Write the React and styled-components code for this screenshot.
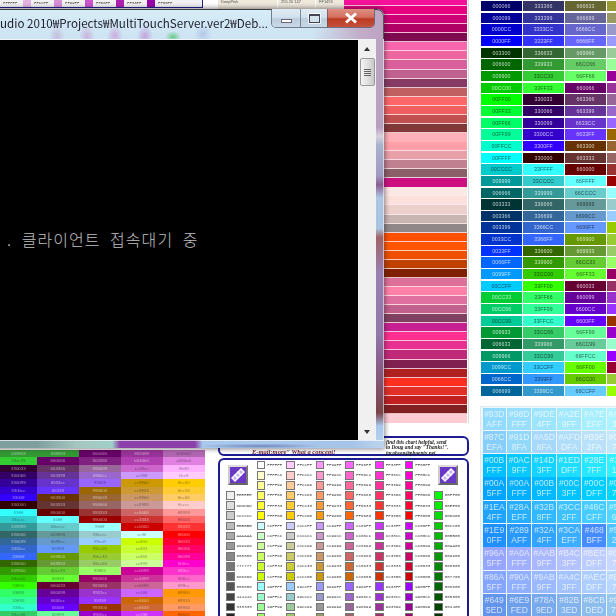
import React from 'react';
import styled, { createGlobalStyle } from 'styled-components';

const GlobalStyle = createGlobalStyle`
    html, body { margin: 0; padding: 0; background: #fff; }
    body { font-family: "Liberation Sans", "Noto Sans CJK KR", sans-serif; }
`;

const luminance = (hex) => {
    const n = parseInt(hex.replace('#', ''), 16);
    return (0.299 * (n >> 16) + 0.587 * ((n >> 8) & 255) + 0.114 * (n & 255)) / 255;
};
const inkFor = (hex, alpha = 0.72) =>
    luminance(hex) > 0.52 ? `rgba(0,0,0,${alpha - 0.1})` : `rgba(255,255,255,${alpha})`;

const TABLE_ROWS = [
    ['000066', '333366', '666633', '999933'], ['000099', '333399', '666699', '999966'],
    ['0000CC', '3333CC', '6666CC', '9999CC'], ['0000FF', '3333FF', '6666FF', '9999FF'],
    ['003300', '336633', '669966', '99CC99'], ['006600', '339933', '66CC66', '99FF99'],
    ['009900', '33CC33', '66FF66', '990099'], ['00CC00', '33FF33', '660066', '993399'],
    ['00FF00', '330033', '663366', '996699'], ['00FF33', '330066', '663399', '9966CC'],
    ['00FF66', '330099', '6633CC', '9966FF'], ['00FF99', '3300CC', '6633FF', '996600'],
    ['00FFCC', '3300FF', '663300', '996633'], ['00FFFF', '330000', '663333', '996666'],
    ['00CCCC', '33FFFF', '660000', '993333'], ['009999', '33CCCC', '66FFFF', '990000'],
    ['006666', '339999', '66CCCC', '99FFFF'], ['003333', '336666', '669999', '99CCCC'],
    ['003366', '336699', '6699CC', '99CCFF'], ['003399', '3366CC', '6699FF', '99CC00'],
    ['0033CC', '3366FF', '669900', '99CC33'], ['0033FF', '336600', '669933', '99CC66'],
    ['0066FF', '339900', '66CC33', '99FF66'], ['0099FF', '33CC00', '66FF33', '990066'],
    ['00CCFF', '33FF00', '660033', '993366'], ['00CC33', '33FF66', '660099', '9933CC'],
    ['00CC66', '33FF99', '6600CC', '9933FF'], ['00CC99', '33FFCC', '6600FF', '993300'],
    ['009933', '33CC66', '66FF99', '9900CC'], ['006633', '339966', '66CC99', '99FFCC'],
    ['009966', '33CC99', '66FFCC', '9900FF'], ['0099CC', '33CCFF', '66FF00', '990033'],
    ['0066CC', '3399FF', '66CC00', '99CC33'], ['006699', '3399CC', '66CCFF', '99FF00'],
];

const BLUE_ROWS = [
    ['93DAFF', '98DFFF', '9DE4FF', 'A2E9FF', 'A7EEFF', 'ACF3FF'],
    ['87CEFA', '91D8FA', 'A5D8FA', 'AFDDFA', 'B9E2FA', 'C3E7FA'],
    ['00BFFF', '0AC9FF', '14D3FF', '1EDDFF', '28E7FF', '32F1FF'],
    ['00A5FF', '00AFFF', '00B9FF', '00C3FF', '00CDFF', '00D7FF'],
    ['1EA4FF', '28AEFF', '32B8FF', '3CC2FF', '46CCFF', '50D6FF'],
    ['1E90FF', '289AFF', '32A4FF', '3CAEFF', '468BFF', '50C2FF'],
    ['96A5FF', 'A0AFFF', 'AAB9FF', 'B4C3FF', 'BECDFF', 'C8D7FF'],
    ['86A5FF', '90AFFF', '9AB9FF', 'A4C3FF', 'AECDFF', 'B8D7FF'],
    ['6495ED', '6E9FED', '78A9ED', '82B3ED', '8CBDED', '96C7ED'],
];

const LEFT_ROWS = [
    ['339933', '339933', '660066', '993399', 'b266b2'], ['33cc33', '660066', '802080', 'b040b0', 'e080e0'],
    ['330033', '663366', '996699', 'cc66cc', 'ffb3ff'], ['330066', '663399', '9966cc', 'cc99ff', 'ffccff'],
    ['330099', '6633cc', '9966ff', 'cc9900', 'ffcc00'], ['3300cc', '6633ff', '996600', 'cc9933', 'ffcc33'],
    ['3300ff', '663300', '996633', 'cc9966', 'ffcc66'], ['330000', '663333', '996666', 'cc9999', 'ffcccc'],
    ['33ffff', '660000', '993333', 'cc6666', 'ff9999'], ['33cccc', '66ffff', '990000', 'cc3333', 'ff6666'],
    ['339999', '66cccc', '99ffff', 'cc0000', 'ff3333'], ['336666', '669999', '99cccc', 'ccffff', 'ff0000'],
    ['336699', '6699cc', '99ccff', 'ccff00', 'ff0033'], ['3366cc', '6699ff', '99cc00', 'ccff33', 'ff0066'],
    ['3366ff', '669900', '99cc33', 'ccff66', 'ff0099'], ['336600', '669933', '99cc66', 'ccff99', 'ff00cc'],
    ['339900', '66cc33', '99ff66', 'cc0099', 'ff33cc'], ['33cc00', '66ff33', '990066', 'cc3399', 'ff66cc'],
    ['33ff00', '660033', '993366', 'cc6699', 'ff99cc'], ['33ff66', '660099', '9933cc', 'cc66ff', 'ff9900'],
    ['33ff99', '6600cc', '9933ff', 'cc6600', 'ff9933'], ['33ffcc', '6600ff', '993300', 'cc6633', 'ff9966'],
    ['33cc66', '66ff99', '9900cc', 'cc33ff', 'ff6600'],
];

const STRIPES = [
    ['#f5109a', 1], ['#e6007f', 1], ['#cc0077', 1], ['#b00066', 1], ['#7f0a50', 1],
    ['#f765ac', 1], ['#ee66a0', 1], ['#d9609a', 1], ['#c0608f', 1], ['#843a62', 1],
    ['#c06060', 1], ['#ff6666', 1], ['#ee6060', 1], ['#c05050', 1], ['#803838', 1],
    ['#ffb0b8', 0], ['#ffa0a8', 1], ['#e8a0a8', 1], ['#c08090', 1], ['#8a6068', 1],
    ['#cc1080', 0], ['#fce8e4', 1], ['#fce0dc', 1], ['#ecd0cc', 1], ['#c8b4b0', 1], ['#908888', 1],
    ['#ff5000', 1], ['#ff5500', 1], ['#ee4f00', 1], ['#c04000', 1], ['#802000', 1],
    ['#dd7098', 1], ['#ff80a8', 1], ['#e070a0', 1], ['#c0608c', 1], ['#804060', 1],
    ['#c82090', 1], ['#ff3090', 1], ['#e83090', 1], ['#c02878', 1], ['#802050', 1],
    ['#b02020', 1], ['#ff3020', 1], ['#e03028', 1], ['#c02020', 1], ['#802020', 1],
    ['#ffccd4', 0],
];

const GREYS = ['EEEEEE', 'DDDDDD', 'CCCCCC', 'BBBBBB', 'AAAAAA', '999999', '888888', '777777', '666666', '555555', '444444', '333333', '222222'];
const GREENS = ['00FF00', '00EE00', '00DD00', '00CC00', '00BB00', '00AA00', '009900', '008800', '007700', '006600', '005500', '004400', '003300'];
const STEPS = ['FF', 'CC', '99', '66', '33', '00'];
const RED_STEPS = ['FF', 'CC', '99'];
const swatchColumn = (g) => {
    const list = [];
    RED_STEPS.forEach((r) => STEPS.forEach((b) => list.push(r + g + b)));
    return list.slice(0, 16);
};

const Page = styled.div`
    position: relative;
    width: 616px;
    height: 616px;
    overflow: hidden;
    background: #fff;
    display: grid;
    grid-template-columns: 480px 136px;
`;

const LeftPane = styled.div`
    display: flex;
    flex-direction: column;
    filter: blur(0.4px);
`;

const TopRow = styled.div`
    height: 436px;
    display: flex;
    align-items: flex-start;
`;

const TopPanelEdge = styled.div`
    width: 203px;
    height: 8px;
    flex: none;
    box-sizing: border-box;
    display: flex;
    padding-left: 3px;
    gap: 3.5px;
    background: #f2f2f4;
    border-bottom: 1px solid #1c1c90;
    border-right: 1px solid #1c1c90;
`;

const TopSwatchLabel = styled.span`
    width: 16px;
    font: 4px/7px "Liberation Mono", monospace;
    color: #444;
`;

const TopSwatch = styled.span`
    width: 8px;
    height: 7px;
    background: ${(p) => p.$bg};
`;

const NameRow = styled.div`
    margin-left: 14px;
    width: 127px;
    height: 9px;
    flex: none;
    display: grid;
    grid-template-columns: 60px 38px 29px;
    background: #eee9dc;
`;

const NameCell = styled.span`
    font: 4px/4px "Liberation Sans", sans-serif;
    color: #555;
    padding-left: 3px;
    border-left: 1px solid #fff;
`;

const StripeColumn = styled.div`
    width: 123px;
    margin-top: -3px;
    flex: none;
    box-sizing: content-box;
    padding-right: 1px;
    border-right: 1px solid #d8dcd8;
`;

const Stripe = styled.div`
    height: 9.07px;
    box-sizing: border-box;
    background: ${(p) => p.$bg};
    border-bottom: ${(p) => (p.$line ? '1.2px solid rgba(255,235,240,.8)' : 'none')};
`;

const BottomRow = styled.div`
    display: flex;
    align-items: flex-start;
`;

const LeftChart = styled.div`
    width: 205px;
    margin-top: 14px;
    flex: none;
    display: grid;
    grid-template-columns: 36.7px 42.3px 41.7px 42px 42.3px;
    grid-auto-rows: 7.33px;
    filter: blur(0.6px);
`;

const ChartCell = styled.span`
    background: #${(p) => p.$bg};
    color: ${(p) => p.$ink};
    font: 4.4px/7.33px "Liberation Sans", sans-serif;
    text-align: center;
    overflow: hidden;
`;

const ChartPanel = styled.div`
    margin-left: 13px;
    width: 251px;
    flex: none;
    display: flex;
    flex-direction: column;
    gap: 2px;
`;

const HeaderBox = styled.div`
    height: 20px;
    box-sizing: border-box;
    border: 2px solid #1c1c90;
    border-radius: 6px;
    display: flex;
    background: #fff;
`;

const Concept = styled.span`
    margin: 9.5px 0 0 32px;
    width: 134px;
    font: italic bold 6.5px/8px "Liberation Serif", serif;
    color: #6b1d2c;
    white-space: nowrap;
`;

const ThanksNote = styled.div`
    font: italic bold 5.3px/5.6px "Liberation Serif", serif;
    color: #222;
    white-space: nowrap;
    margin-top: 1.5px;
`;

const SwatchBox = styled.div`
    box-sizing: border-box;
    height: 170px;
    border: 2px solid #1c1c90;
    border-bottom: none;
    border-radius: 6px 6px 0 0;
    padding-left: 6px;
    background: #fff;
    display: grid;
    grid-auto-flow: column;
    grid-template-rows: repeat(16, 10.15px);
    grid-template-columns: 30.7px repeat(7, 29.6px);
`;

const SwatchItem = styled.div`
    display: flex;
    align-items: center;
    gap: 2px;
`;

const Swatch = styled.span`
    width: 8.6px;
    height: 8.6px;
    flex: none;
    box-sizing: border-box;
    background: #${(p) => p.$bg};
    border: 1px solid #777;
`;

const SwatchLabel = styled.span`
    font: 4.2px/6px "Liberation Mono", monospace;
    color: #444;
`;

const LogoFrame = styled.div`
    grid-row: span 3;
    width: 20px;
    height: 20px;
    margin: 5px 0 0 ${(p) => p.$offset}px;
    box-sizing: border-box;
    border: 2px solid;
    border-color: #ddd #777 #666 #ccc;
`;

const RightPane = styled.div`
    display: flex;
    flex-direction: column;
    filter: blur(0.4px);
    overflow: hidden;
    padding-top: 1px;
`;

const ColorTable = styled.div`
    margin-left: 1px;
    width: 160px;
    display: grid;
    grid-template-columns: repeat(4, 41px);
    column-gap: 1px;
    grid-auto-rows: 10.4px;
    row-gap: 1.27px;
`;

const ColorCell = styled.span`
    background: #${(p) => p.$bg};
    color: ${(p) => p.$ink};
    font: 5.2px/10.4px "Liberation Sans", sans-serif;
    text-align: center;
    letter-spacing: 0.1px;
`;

const BlueTable = styled.div`
    margin-top: 9.5px;
    width: 160px;
    padding: 1px 0 0 1.5px;
    border: 1px solid #dde9f0;
    background: #eef6fb;
    display: grid;
    grid-template-columns: repeat(6, 23.6px);
    column-gap: 1.4px;
    grid-auto-rows: 22.4px;
    row-gap: 0.93px;
`;

const BlueCell = styled.div`
    background: #${(p) => p.$bg};
    color: rgba(255,255,255,.72);
    font: 8.5px/10px "Liberation Sans", sans-serif;
    text-align: center;
    padding-top: 1px;
    box-sizing: border-box;
    white-space: nowrap;
`;

const HexLine = styled.div``;

const ConsoleWindow = styled.div`
    position: absolute;
    left: -10px;
    top: 9px;
    width: 394px;
    height: 439px;
    box-sizing: border-box;
    border-radius: 0 7px 0 0;
    padding: 0 8px;
    display: flex;
    flex-direction: column;
    box-shadow: 0 0 5px 1px rgba(40,30,40,.55), inset -1px 0 0 rgba(255,255,255,.5);
    background: linear-gradient(180deg,
        #bba3c2 0, #b9a0bf 27%, #d8d2dc 29%, #a9b2cc 31%, #a09ac0 38%, #8c5c94 40%,
        #adc6e2 43%, #a8c4e0 50%, #a06264 52%, #9a80b0 60%, #9278a8 74%, #8a6090 80%,
        #7a4448 92%, #a8c8ec 95%, #bcd4ee 100%);
`;

const TitleBar = styled.div`
    height: 30px;
    margin: 0 -8px;
    padding: 0 9px 0 0;
    flex: none;
    display: flex;
    justify-content: space-between;
    border-radius: 0 7px 0 0;
    box-shadow: inset 0 1px 0 #3c3c44, inset -1px 0 0 #555;
    background:
        radial-gradient(ellipse 8px 11px at 67px 27px, rgba(170,90,170,.28), transparent),
        radial-gradient(ellipse 8px 11px at 97px 27px, rgba(190,70,170,.3), transparent),
        radial-gradient(ellipse 8px 11px at 125px 27px, rgba(190,50,170,.32), transparent),
        radial-gradient(ellipse 8px 11px at 155px 27px, rgba(170,40,170,.34), transparent),
        radial-gradient(ellipse 8px 6px at 183px 28px, rgba(60,190,90,.7), transparent),
        radial-gradient(ellipse 9px 9px at 213px 25px, rgba(120,130,210,.3), transparent),
        linear-gradient(90deg, rgba(0,0,0,0) 82%, #c2adc8 94%, #bca3c2 100%),
        linear-gradient(180deg, #d6ecf6, #cde3f3);
`;

const TitleText = styled.div`
    padding: 6px 0 0 10px;
    min-width: 0;
    font: 11.6px/17px "Noto Sans CJK KR", "Noto Sans", sans-serif;
    color: #1b1b2a;
    white-space: nowrap;
    filter: blur(0.3px);
`;

const Controls = styled.div`
    display: flex;
    height: 18px;
    flex: none;
    border: 1px solid rgba(70,80,100,.7);
    border-top: none;
    border-radius: 0 0 5px 5px;
    overflow: hidden;
`;

const ControlButton = styled.div`
    width: ${(p) => p.$w}px;
    display: flex;
    align-items: center;
    justify-content: center;
    box-sizing: border-box;
    border-left: ${(p) => (p.$first ? 'none' : '1px solid rgba(70,80,100,.6)')};
    background: ${(p) =>
        p.$close
            ? 'linear-gradient(180deg, #dd8f82 0, #d4705f 45%, #bb3a22 55%, #c6523c 100%)'
            : 'linear-gradient(180deg, #e0ebf4 0, #d4e2ee 45%, #bccddd 55%, #c8d8e6 100%)'};
`;

const MinGlyph = styled.span`
    width: 11px;
    height: 4px;
    margin-top: 5px;
    box-sizing: border-box;
    border: 1px solid #667;
    background: #fff;
`;

const MaxGlyph = styled.span`
    width: 11px;
    height: 9px;
    box-sizing: border-box;
    border: 1px solid #445;
    border-top-width: 2px;
    background: #d4e2ee;
    box-shadow: 0 0 0 1px rgba(255,255,255,.7);
`;

const ClientArea = styled.div`
    flex: 1;
    min-height: 0;
    display: flex;
    border-top: 1px solid #f0f4f8;
`;

const ConsoleOutput = styled.div`
    flex: 1;
    background: #000;
    padding: 191px 0 0 9px;
    color: #c0c0c0;
    font: 300 16px/16px "Noto Sans CJK KR", sans-serif;
    letter-spacing: 1.05px;
    word-spacing: 5px;
    white-space: pre;
`;

const ScrollBar = styled.div`
    width: 18px;
    flex: none;
    background: #f0f0f0;
    display: flex;
    flex-direction: column;
    align-items: center;
    padding: 7px 0 6px;
    box-sizing: border-box;
`;

const ArrowUp = styled.span`
    border-left: 3.5px solid transparent;
    border-right: 3.5px solid transparent;
    border-bottom: 4px solid #333;
`;

const ArrowDown = styled.span`
    margin-top: auto;
    border-left: 3.5px solid transparent;
    border-right: 3.5px solid transparent;
    border-top: 4px solid #333;
`;

const Thumb = styled.div`
    width: 15px;
    height: 28px;
    margin-top: 7px;
    box-sizing: border-box;
    border: 1px solid #9a9a9a;
    border-radius: 2px;
    background: linear-gradient(90deg, #f4f4f4, #dedede 55%, #c8c8c8);
    display: flex;
    flex-direction: column;
    align-items: center;
    justify-content: center;
    gap: 1px;
`;

const Grip = styled.span`
    width: 7px;
    height: 1px;
    background: #666;
`;

const BottomFrame = styled.div`
    height: 8px;
    flex: none;
    margin: 0 -8px;
    box-shadow: inset 0 1px 0 rgba(255,255,255,.65);
    filter: blur(0.5px);
    background:
        radial-gradient(ellipse 60px 2.5px at 270px 6px, rgba(60,70,140,.5), transparent),
        linear-gradient(90deg,
            #7f9f9f 0, #7f9f9f 12%, #a5c5c0 22%, #9fd0c8 31%, #8a40a8 33%,
            #8a40a8 52%, #a8c8ec 54%, #a6c4e8 92%, #bcd4ee 100%);
`;

const KnotLogo = () => (
    <svg width="16" height="16" viewBox="0 0 16 16" style={{ display: 'block' }}>
        <rect width="16" height="16" fill="#6a38c4" />
        <g fill="#c8b4ee" stroke="#fff" strokeWidth="1.4">
            <path d="M2 11 L5 8 L8 11 L5 14 Z" />
            <path d="M5 8 L8 5 L11 8 L8 11 Z" />
            <path d="M8 5 L11 2 L14 5 L11 8 Z" />
        </g>
    </svg>
);

const SwatchEntry = ({ hex }) => (
    <SwatchItem>
        <Swatch $bg={hex} />
        <SwatchLabel>{hex}</SwatchLabel>
    </SwatchItem>
);

const App = () => {
    return (
        <Page>
            <GlobalStyle />
            <LeftPane>
                <TopRow>
                    <TopPanelEdge>
                        <TopSwatchLabel>FFFFFF</TopSwatchLabel>
                        <TopSwatch $bg="#e4b4e4" />
                        <TopSwatchLabel>FFCCFF</TopSwatchLabel>
                        <TopSwatch $bg="#d890d8" />
                        <TopSwatchLabel>FF99FF</TopSwatchLabel>
                        <TopSwatch $bg="#cc55cc" />
                        <TopSwatchLabel>FF66FF</TopSwatchLabel>
                        <TopSwatch $bg="#b020b0" />
                        <TopSwatchLabel>FF33FF</TopSwatchLabel>
                        <TopSwatch $bg="#9900aa" />
                        <TopSwatchLabel>FF00FF</TopSwatchLabel>
                    </TopPanelEdge>
                    <NameRow>
                        <NameCell>DeepPink</NameCell>
                        <NameCell>255 20 147</NameCell>
                        <NameCell>FF1493</NameCell>
                    </NameRow>
                    <StripeColumn>
                        {STRIPES.map(([bg, line], i) => (
                            <Stripe key={i} $bg={bg} $line={line} />
                        ))}
                    </StripeColumn>
                </TopRow>
                <BottomRow>
                    <LeftChart>
                        {LEFT_ROWS.flat().map((hex, i) => (
                            <ChartCell key={i} $bg={hex} $ink={inkFor(hex, 0.5)}>{hex}</ChartCell>
                        ))}
                    </LeftChart>
                    <ChartPanel>
                        <HeaderBox>
                            <Concept>E-mail:more&quot; What a concept!</Concept>
                            <ThanksNote>
                                find this chart helpful, send<br />
                                to Doug and say &quot;Thanks!&quot;.<br />
                                jacobson@phoenix.net
                            </ThanksNote>
                        </HeaderBox>
                        <SwatchBox>
                            <LogoFrame $offset={2}><KnotLogo /></LogoFrame>
                            {GREYS.map((hex) => <SwatchEntry key={hex} hex={hex} />)}
                            {STEPS.map((g) =>
                                swatchColumn(g).map((hex) => <SwatchEntry key={hex} hex={hex} />)
                            )}
                            <LogoFrame $offset={4}><KnotLogo /></LogoFrame>
                            {GREENS.map((hex) => <SwatchEntry key={hex} hex={hex} />)}
                        </SwatchBox>
                    </ChartPanel>
                </BottomRow>
            </LeftPane>
            <RightPane>
                <ColorTable>
                    {TABLE_ROWS.flat().map((hex, i) => (
                        <ColorCell key={i} $bg={hex} $ink={inkFor(hex)}>{hex}</ColorCell>
                    ))}
                </ColorTable>
                <BlueTable>
                    {BLUE_ROWS.flat().map((hex, i) => (
                        <BlueCell key={i} $bg={hex}>
                            <HexLine>#{hex.slice(0, 3)}</HexLine>
                            <HexLine>{hex.slice(3)}</HexLine>
                        </BlueCell>
                    ))}
                </BlueTable>
            </RightPane>
            <ConsoleWindow>
                <TitleBar>
                    <TitleText>udio 2010₩Projects₩MultiTouchServer.ver2₩Deb...</TitleText>
                    <Controls>
                        <ControlButton $w={28} $first><MinGlyph /></ControlButton>
                        <ControlButton $w={27}><MaxGlyph /></ControlButton>
                        <ControlButton $w={47} $close>
                            <svg width="16" height="12" viewBox="0 0 16 12">
                                <path d="M3 1.5 L13 10.5 M13 1.5 L3 10.5" stroke="#fff" strokeWidth="3" fill="none" />
                            </svg>
                        </ControlButton>
                    </Controls>
                </TitleBar>
                <ClientArea>
                    <ConsoleOutput>. 클라이언트 접속대기 중</ConsoleOutput>
                    <ScrollBar>
                        <ArrowUp />
                        <Thumb>
                            <Grip />
                            <Grip />
                            <Grip />
                            <Grip />
                        </Thumb>
                        <ArrowDown />
                    </ScrollBar>
                </ClientArea>
                <BottomFrame />
            </ConsoleWindow>
        </Page>
    );
};

export default App;
